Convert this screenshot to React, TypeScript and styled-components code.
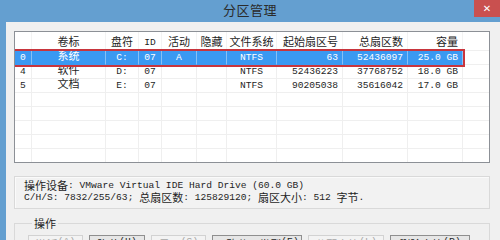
import React from 'react';
import styled, { createGlobalStyle } from 'styled-components';

const CJK = '"Noto Sans CJK SC", "Noto Sans", sans-serif';
const MONO = '"Liberation Mono", "Noto Sans CJK SC", monospace';

const GlobalStyle = createGlobalStyle`
    html, body {
        margin: 0;
        padding: 0;
        background: #ffffff;
    }
    body {
        font-family: ${CJK};
    }
`;

const COLUMNS = '17px 74px 33px 23px 35px 30px 50px 66px 65px 55px';
const ALIGN = ['center', 'center', 'center', 'center', 'center', 'center', 'center', 'flex-end', 'flex-end', 'flex-end'];
const HEADERS = ['', '卷标', '盘符', 'ID', '活动', '隐藏', '文件系统', '起始扇区号', '总扇区数', '容量'];

const partitions = [
    ['0', '系统', 'C:', '07', 'A', '', 'NTFS', '63', '52436097', '25.0 GB'],
    ['4', '软件', 'D:', '07', '', '', 'NTFS', '52436223', '37768752', '18.0 GB'],
    ['5', '文档', 'E:', '07', '', '', 'NTFS', '90205038', '35616042', '17.0 GB'],
];

const EMPTY_ROWS = 5;

const buttons = [
    { label: '激活', key: 'A', width: 55, disabled: true },
    { label: '隐藏', key: 'H', width: 56, disabled: false },
    { label: '显示', key: 'S', width: 55, disabled: true },
    { label: '更改分区类型', key: 'E', width: 90, disabled: false },
    { label: '分配盘符', key: 'L', width: 76, disabled: true },
    { label: '删除盘符', key: 'R', width: 80, disabled: false },
];

const isLatin = (s: string) => /^[\x00-\x7f]*$/.test(s);

const App = () => {
    return (
        <Window>
            <GlobalStyle/>
            <TitleBar>
                <span/>
                <Title>分区管理</Title>
                <CloseButton>✕</CloseButton>
            </TitleBar>
            <Frame>
                <Body>
                    <ListBox>
                        <HeaderRow>
                            <RowCells>
                                {HEADERS.map((h, i) => (
                                    <HeaderCell key={i} $align={ALIGN[i]} $mono={isLatin(h)}>{h}</HeaderCell>
                                ))}
                            </RowCells>
                            <Filler/>
                        </HeaderRow>
                        {partitions.map((row, r) => (
                            <Row key={r}>
                                <RowCells $selected={r === 0}>
                                    {row.map((value, i) => (
                                        <Cell key={i}
                                            $align={ALIGN[i]}
                                            $mono={isLatin(value)}
                                            $selected={r === 0}
                                        >
                                            {value}
                                        </Cell>
                                    ))}
                                </RowCells>
                                <Filler/>
                            </Row>
                        ))}
                        {Array.from({ length: EMPTY_ROWS }).map((_, r) => (
                            <Row key={'e' + r}>
                                <RowCells>
                                    {ALIGN.map((a, i) => <Cell key={i} $align={a} $mono/>)}
                                </RowCells>
                                <Filler/>
                            </Row>
                        ))}
                    </ListBox>
                    <InfoBox>
                        <InfoLine>
                            <Han>操作设备</Han><Mono>: VMware Virtual IDE Hard Drive (60.0 GB)</Mono>
                        </InfoLine>
                        <InfoLine>
                            <Mono>C/H/S: 7832/255/63; </Mono><Han>总扇区数</Han><Mono>: 125829120; </Mono><Han>扇区大小</Han><Mono>: 512 </Mono><Han>字节</Han><Mono>.</Mono>
                        </InfoLine>
                    </InfoBox>
                    <Group>
                        <Legend>操作</Legend>
                        <ButtonRow>
                            {buttons.map(b => (
                                <ActionButton key={b.key} $width={b.width} disabled={b.disabled}>
                                    {b.label}<Mono>({b.key})</Mono>
                                </ActionButton>
                            ))}
                        </ButtonRow>
                    </Group>
                </Body>
            </Frame>
        </Window>
    );
};

const Window = styled.div`
    width: 500px;
    height: 240px;
    overflow: hidden;
    display: flex;
    flex-direction: column;
    background: #649fd0;
`;

const TitleBar = styled.div`
    height: 22px;
    flex: none;
    display: grid;
    grid-template-columns: 1fr auto 1fr;
    align-items: start;
    background: #649fd0;
`;

const Title = styled.div`
    font-family: ${CJK};
    font-size: 13px;
    line-height: 19px;
    color: #2b2b2b;
    letter-spacing: 0.5px;
`;

const CloseButton = styled.div`
    justify-self: end;
    width: 26px;
    height: 17px;
    background: #c9504f;
    color: #ffffff;
    font-family: "DejaVu Sans", sans-serif;
    font-size: 10px;
    font-weight: bold;
    line-height: 17px;
    text-align: center;
`;

const Frame = styled.div`
    flex: 1;
    display: flex;
    padding-left: 6px;
    min-height: 0;
`;

const Body = styled.div`
    flex: 1;
    display: flex;
    flex-direction: column;
    background: #f0f0f0;
    padding: 9px 10px 0 8px;
`;

const ListBox = styled.div`
    height: 132px;
    flex: none;
    box-sizing: border-box;
    border: 1px solid #8c9096;
    background: #ffffff;
    overflow: hidden;
`;

const Row = styled.div`
    display: flex;
    height: 14px;
`;

const HeaderRow = styled(Row)`
    height: 19px;
`;

const RowCells = styled.div<{ $selected?: boolean }>`
    display: grid;
    grid-template-columns: ${COLUMNS};
    height: 100%;
    box-sizing: border-box;
    background: ${p => p.$selected ? '#3a99f2' : 'transparent'};
    outline: ${p => p.$selected ? '2px solid #c8353d' : 'none'};
    outline-offset: 0;
    position: relative;
    z-index: ${p => p.$selected ? 1 : 0};
`;

const Cell = styled.div<{ $align: string; $mono?: boolean; $selected?: boolean }>`
    box-sizing: border-box;
    height: 14px;
    padding: ${p => p.$mono ? '0 4px' : '0 4px 5px'};
    display: flex;
    align-items: center;
    justify-content: ${p => p.$align};
    white-space: nowrap;
    font-family: ${p => p.$mono ? MONO : CJK};
    font-size: ${p => p.$mono ? '9.6px' : '11px'};
    line-height: 1;
    color: ${p => p.$selected ? '#ffffff' : '#1e1e1e'};
    border-right: 1px solid ${p => p.$selected ? '#86c0f5' : '#efefef'};
    border-bottom: 1px solid ${p => p.$selected ? 'transparent' : '#efefef'};
`;

const HeaderCell = styled(Cell)`
    height: 19px;
    padding-top: ${p => p.$mono ? '2px' : '0'};
    padding-bottom: ${p => p.$mono ? '0' : '1px'};
    border-bottom: none;
    border-right: 1px solid #f3f3f3;
`;

const Filler = styled.div`
    flex: 1;
    border-bottom: 1px solid #efefef;
`;

const InfoBox = styled.div`
    margin-top: 13px;
    height: 33px;
    flex: none;
    box-sizing: border-box;
    padding: 3px 9px;
    border: 1px solid #d9d9d9;
    box-shadow: inset 1px 1px 0 #fafafa;
    background: #f2f2f2;
`;

const InfoLine = styled.div`
    height: 12px;
    display: flex;
    align-items: center;
    white-space: nowrap;
    color: #1e1e1e;
`;

const Han = styled.span`
    font-family: ${CJK};
    font-size: 11px;
    line-height: 1;
    position: relative;
    top: -1px;
`;

const Mono = styled.span`
    font-family: ${MONO};
    font-size: 9.6px;
    line-height: 1;
    white-space: pre;
`;

const Group = styled.fieldset`
    margin: 7px 0 0;
    padding: 5px 0 0 13px;
    border: 1px solid #d9d9d9;
    min-width: 0;
`;

const Legend = styled.legend`
    margin-left: 4px;
    padding: 0 2px;
    font-family: ${CJK};
    font-size: 11px;
    line-height: 14px;
    color: #1e1e1e;
`;

const ButtonRow = styled.div`
    display: flex;
    gap: 6px;
`;

const ActionButton = styled.button<{ $width: number }>`
    width: ${p => p.$width}px;
    height: 20px;
    padding: 1px 0 0;
    display: flex;
    align-items: flex-start;
    justify-content: center;
    box-sizing: border-box;
    border: 1px solid #8f8f8f;
    background: #e6e6e6;
    font-family: ${CJK};
    font-size: 11px;
    line-height: 14px;
    color: #1e1e1e;
    white-space: nowrap;

    &:disabled {
        border-color: #d2d2d2;
        background: #f3f3f3;
        color: #a6a6a6;
    }
`;

export default App;
